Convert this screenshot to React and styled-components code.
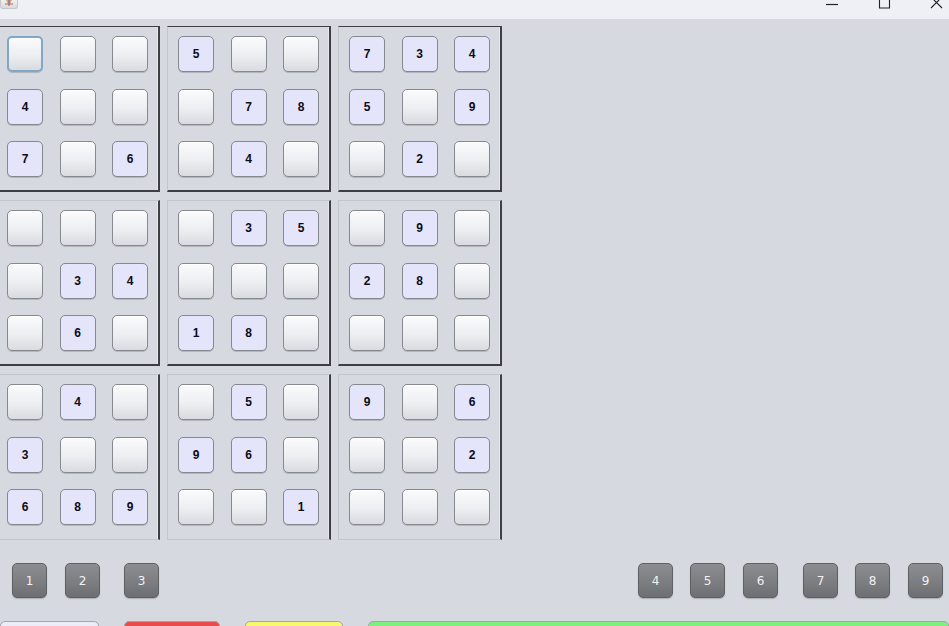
import React from "react"
import styled, { createGlobalStyle, css } from "styled-components"

const GlobalStyle = createGlobalStyle`
  html, body {
    margin: 0;
    padding: 0;
    background: #d6d9df;
    overflow: hidden;
  }
  body {
    font-family: "DejaVu Sans", "Liberation Sans", sans-serif;
  }
`

const Frame = styled.div`
  width: 949px;
  height: 626px;
  display: flex;
  flex-direction: column;
  overflow: hidden;
  background: #d6d9df;
`

const TitleBar = styled.div`
  height: 19px;
  flex: none;
  background: #eff0f5;
  display: flex;
  align-items: flex-start;
  justify-content: space-between;
  overflow: hidden;
`

const AppIcon = styled.div`
  width: 16px;
  height: 10px;
  margin-top: -2px;
  background: linear-gradient(#f4f4f6, #d9dbe0);
  border: 1px solid #c5c7cc;
  border-top: none;
  border-radius: 0 0 3px 3px;
  display: flex;
  align-items: center;
  justify-content: center;
`

const Controls = styled.div`
  display: flex;
  align-items: flex-start;
  gap: 39px;
  margin-right: 6px;
`

const Board = styled.div`
  display: grid;
  grid-template-columns: repeat(3, 164px);
  grid-auto-rows: 166px;
  column-gap: 7px;
  row-gap: 8px;
  margin: 7px 0 0 -4px;
`

const light = "#c2c5cb"
const dark = "#3d3f43"

const Block = styled.div`
  box-sizing: border-box;
  display: grid;
  grid-template-columns: repeat(3, 36px);
  grid-template-rows: repeat(3, 36px);
  column-gap: 16.5px;
  row-gap: 16.5px;
  padding: 9px 11px 14px 10px;
  border-left: 1px solid ${light};
  border-right: 2px solid ${dark};
  border-top: 1px solid ${dark};
  border-bottom: 2px solid ${dark};
  box-shadow: inset -1px 0 0 #e6e8ec;
  ${(p) => p.$row > 0 && css`
    border-top: 1px solid ${light};
  `}
  ${(p) => p.$row === 2 && css`
    border-bottom: 1px solid ${light};
  `}
`

const Cell = styled.div`
  box-sizing: border-box;
  width: 36px;
  height: 36px;
  border-radius: 5px;
  border: 1px solid #86898f;
  box-shadow: 0 1px 0 rgba(0, 0, 0, 0.16), inset 0 1px 0 #ffffff;
  background: linear-gradient(#fbfbfc 0%, #eceef1 55%, #d9dbe0 100%);
  display: flex;
  align-items: center;
  justify-content: center;
  font-family: "Liberation Sans", "DejaVu Sans", sans-serif;
  font-size: 12px;
  font-weight: bold;
  color: #0c0c14;
  ${(p) => p.$given && css`
    background: #e4e4fb;
    box-shadow: 0 1px 0 rgba(0, 0, 0, 0.16);
  `}
  ${(p) => p.$focus && css`
    border: 2px solid #80a6c8;
  `}
`

const NumberRow = styled.div`
  display: flex;
  align-items: center;
  margin-top: 23px;
  padding: 0 6px 0 12px;
`

const Spacer = styled.div`
  flex: 1;
`

const NumberKey = styled.div`
  box-sizing: border-box;
  width: 35px;
  height: 35px;
  margin-left: ${(p) => p.$gap}px;
  border-radius: 5px;
  border: 1px solid #5f6064;
  background: linear-gradient(#8c8d90 0%, #7b7c7f 60%, #6d6e71 100%);
  box-shadow: 0 1px 1px rgba(0, 0, 0, 0.2);
  display: flex;
  align-items: center;
  justify-content: center;
  color: #f2f2f2;
  font-size: 12px;
`

const ActionRow = styled.div`
  display: flex;
  margin-top: 23px;
  gap: 25px;
`

const ActionButton = styled.div`
  box-sizing: border-box;
  height: 30px;
  width: ${(p) => p.$width}px;
  flex: ${(p) => (p.$grow ? 1 : "none")};
  border: 1px solid #a2a5ab;
  border-radius: 5px;
  background: ${(p) => p.$color};
`

const blocks = [
  [["", "", ""], ["4", "", ""], ["7", "", "6"]],
  [["5", "", ""], ["", "7", "8"], ["", "4", ""]],
  [["7", "3", "4"], ["5", "", "9"], ["", "2", ""]],
  [["", "", ""], ["", "3", "4"], ["", "6", ""]],
  [["", "3", "5"], ["", "", ""], ["1", "8", ""]],
  [["", "9", ""], ["2", "8", ""], ["", "", ""]],
  [["", "4", ""], ["3", "", ""], ["6", "8", "9"]],
  [["", "5", ""], ["9", "6", ""], ["", "", "1"]],
  [["9", "", "6"], ["", "", "2"], ["", "", ""]],
]

const leftKeys = [
  { n: 1, gap: 0 },
  { n: 2, gap: 18 },
  { n: 3, gap: 24 },
]

const rightKeys = [
  { n: 4, gap: 0 },
  { n: 5, gap: 17 },
  { n: 6, gap: 18 },
  { n: 7, gap: 25 },
  { n: 8, gap: 17 },
  { n: 9, gap: 18 },
]

function WindowControls() {
  return (
    <Controls>
      <svg width="14" height="8" viewBox="0 0 14 8">
        <path d="M1 4.5h12" stroke="#222" strokeWidth="1.2" />
      </svg>
      <svg width="13" height="9" viewBox="0 0 13 9">
        <path d="M1.5 -2v10h10v-10" fill="none" stroke="#222" strokeWidth="1.1" />
      </svg>
      <svg width="13" height="9" viewBox="0 0 13 9">
        <path d="M1 -3l11 11M12 -3l-11 11" stroke="#222" strokeWidth="1.1" />
      </svg>
    </Controls>
  )
}

export default function App() {
  return (
    <Frame>
      <GlobalStyle />
      <TitleBar>
        <AppIcon>
          <svg width="10" height="8" viewBox="0 0 10 8">
            <path d="M2 1h6M3 3h4M1 5h8" stroke="#d8641e" strokeWidth="1.2" />
            <path d="M5 0v7" stroke="#3a6ab5" strokeWidth="1" />
          </svg>
        </AppIcon>
        <WindowControls />
      </TitleBar>

      <Board>
        {blocks.map((block, b) => (
          <Block key={b} $row={Math.floor(b / 3)}>
            {block.flat().map((value, i) => (
              <Cell key={i} $given={value !== ""} $focus={b === 0 && i === 0}>
                {value}
              </Cell>
            ))}
          </Block>
        ))}
      </Board>

      <NumberRow>
        {leftKeys.map((k) => (
          <NumberKey key={k.n} $gap={k.gap}>{k.n}</NumberKey>
        ))}
        <Spacer />
        {rightKeys.map((k) => (
          <NumberKey key={k.n} $gap={k.gap}>{k.n}</NumberKey>
        ))}
      </NumberRow>

      <ActionRow>
        <ActionButton $width={99} $color="#ececf8" />
        <ActionButton $width={96} $color="#e84c4c" />
        <ActionButton $width={98} $color="#f8f870" />
        <ActionButton $grow $color="#7ff07f" />
      </ActionRow>
    </Frame>
  )
}
